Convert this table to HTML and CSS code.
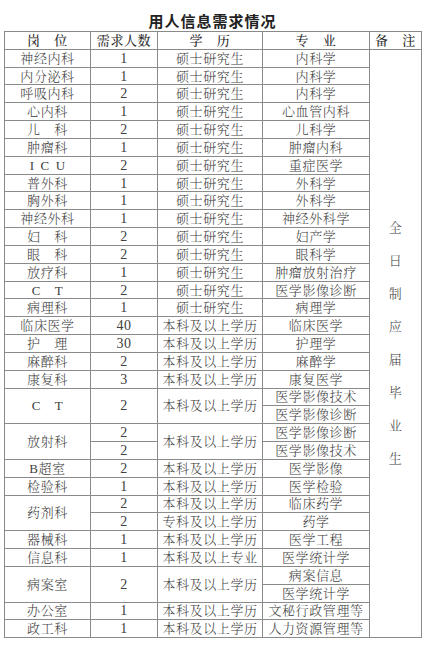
FILE: index.html
```html
<!DOCTYPE html>
<html lang="zh-CN">
<head>
<meta charset="utf-8">
<title>用人信息需求情况</title>
<link rel="stylesheet" href="styles.css">
</head>
<body>
<div class="page">
  <h1 class="title">用人信息需求情况</h1>
  <table class="grid">
    <colgroup>
      <col class="c1"><col class="c2"><col class="c3"><col class="c4"><col class="c5">
    </colgroup>
    <thead>
      <tr class="head">
        <th>岗　位</th><th>需求人数</th><th>学　历</th><th>专　业</th><th>备　注</th>
      </tr>
    </thead>
    <tbody>
      <tr><td>神经内科</td><td class="num">1</td><td>硕士研究生</td><td>内科学</td>
        <td class="note" rowspan="33"><div class="vert"><span>全</span><span>日</span><span>制</span><span>应</span><span>届</span><span>毕</span><span>业</span><span>生</span></div></td></tr>
      <tr><td>内分泌科</td><td class="num">1</td><td>硕士研究生</td><td>内科学</td></tr>
      <tr><td>呼吸内科</td><td class="num">2</td><td>硕士研究生</td><td>内科学</td></tr>
      <tr><td>心内科</td><td class="num">1</td><td>硕士研究生</td><td>心血管内科</td></tr>
      <tr><td>儿　科</td><td class="num">2</td><td>硕士研究生</td><td>儿科学</td></tr>
      <tr><td>肿瘤科</td><td class="num">1</td><td>硕士研究生</td><td>肿瘤内科</td></tr>
      <tr><td class="icu">I C U</td><td class="num">2</td><td>硕士研究生</td><td>重症医学</td></tr>
      <tr><td>普外科</td><td class="num">1</td><td>硕士研究生</td><td>外科学</td></tr>
      <tr><td>胸外科</td><td class="num">1</td><td>硕士研究生</td><td>外科学</td></tr>
      <tr><td>神经外科</td><td class="num">1</td><td>硕士研究生</td><td>神经外科学</td></tr>
      <tr><td>妇　科</td><td class="num">2</td><td>硕士研究生</td><td>妇产学</td></tr>
      <tr><td>眼　科</td><td class="num">2</td><td>硕士研究生</td><td>眼科学</td></tr>
      <tr><td>放疗科</td><td class="num">1</td><td>硕士研究生</td><td>肿瘤放射治疗</td></tr>
      <tr><td>C　T</td><td class="num">2</td><td>硕士研究生</td><td>医学影像诊断</td></tr>
      <tr><td>病理科</td><td class="num">1</td><td>硕士研究生</td><td>病理学</td></tr>
      <tr><td>临床医学</td><td class="num">40</td><td>本科及以上学历</td><td>临床医学</td></tr>
      <tr><td>护　理</td><td class="num">30</td><td>本科及以上学历</td><td>护理学</td></tr>
      <tr><td>麻醉科</td><td class="num">2</td><td>本科及以上学历</td><td>麻醉学</td></tr>
      <tr><td>康复科</td><td class="num">3</td><td>本科及以上学历</td><td>康复医学</td></tr>
      <tr><td rowspan="2">C　T</td><td class="num" rowspan="2">2</td><td rowspan="2">本科及以上学历</td><td>医学影像技术</td></tr>
      <tr><td>医学影像诊断</td></tr>
      <tr><td rowspan="2">放射科</td><td class="num">2</td><td rowspan="2">本科及以上学历</td><td>医学影像诊断</td></tr>
      <tr><td class="num">2</td><td>医学影像技术</td></tr>
      <tr><td>B超室</td><td class="num">2</td><td>本科及以上学历</td><td>医学影像</td></tr>
      <tr><td>检验科</td><td class="num">1</td><td>本科及以上学历</td><td>医学检验</td></tr>
      <tr><td rowspan="2">药剂科</td><td class="num">2</td><td>本科及以上学历</td><td>临床药学</td></tr>
      <tr><td class="num">2</td><td>专科及以上学历</td><td>药学</td></tr>
      <tr><td>器械科</td><td class="num">1</td><td>本科及以上学历</td><td>医学工程</td></tr>
      <tr><td>信息科</td><td class="num">1</td><td>本科及以上专业</td><td>医学统计学</td></tr>
      <tr><td rowspan="2">病案室</td><td class="num" rowspan="2">2</td><td rowspan="2">本科及以上学历</td><td>病案信息</td></tr>
      <tr><td>医学统计学</td></tr>
      <tr><td>办公室</td><td class="num">1</td><td>本科及以上学历</td><td>文秘行政管理等</td></tr>
      <tr><td>政工科</td><td class="num">1</td><td>本科及以上学历</td><td>人力资源管理等</td></tr>
    </tbody>
  </table>
</div>
</body>
</html>
```

FILE: styles.css
```css
html, body {
  margin: 0;
  padding: 0;
  background: #ffffff;
}

body {
  font-family: "Liberation Serif", "Noto Serif CJK SC", "Noto Sans CJK SC", serif;
  color: #404040;
}

.page {
  width: 417px;
  padding-left: 4px;
}

.title {
  margin: 0;
  height: 31px;
  padding-top: 12px;
  box-sizing: border-box;
  font-family: "Noto Sans CJK SC", sans-serif;
  font-size: 15px;
  line-height: 18px;
  font-weight: 700;
  letter-spacing: 1px;
  text-align: center;
  color: #222222;
}

.grid {
  width: 417px;
  border-collapse: collapse;
  table-layout: fixed;
  border: 1px solid #8a8a8a;
}

.c1 { width: 86px; }
.c2 { width: 67px; }
.c3 { width: 105px; }
.c4 { width: 107px; }
.c5 { width: 52px; }

.grid tr {
  height: 17.83px;
}

.grid th,
.grid td {
  border: 1px solid #8a8a8a;
  padding: 0;
  font-size: 13px;
  line-height: 13px;
  letter-spacing: 0.6px;
  text-align: center;
  vertical-align: middle;
  white-space: nowrap;
  overflow: hidden;
  font-family: "Liberation Serif", "Noto Serif CJK SC", "Noto Sans CJK SC", serif;
  font-weight: 300;
}

.grid th {
  font-weight: 500;
  color: #2a2a2a;
}

.grid td.num {
  font-size: 14px;
}

.grid td.icu {
  letter-spacing: 1.6px;
  padding-left: 1.6px;
}

.vert {
  display: flex;
  flex-direction: column;
  align-items: center;
}

.vert span {
  display: block;
  line-height: 33px;
  height: 33px;
}
```
